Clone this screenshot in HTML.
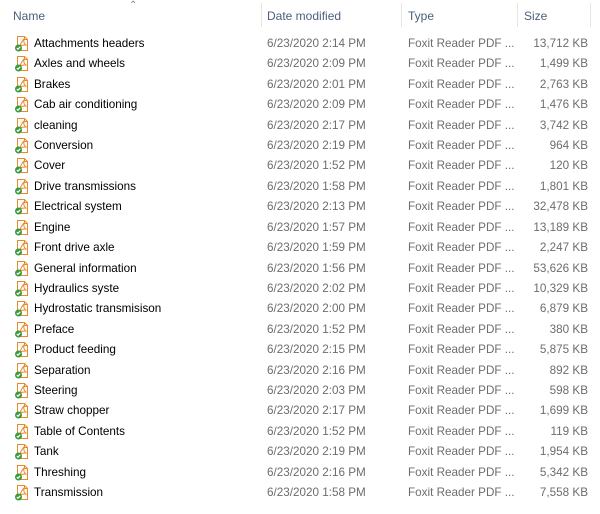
<!DOCTYPE html>
<html><head><style>
body{margin:0;width:600px;height:514px;background:#fff;font-family:"Liberation Sans",sans-serif;font-size:11.7px;overflow:hidden;position:relative}
.h{position:absolute;top:9px;color:#4c607a;font-size:12px}
.sep{position:absolute;top:3px;width:1px;height:24px;background:#e5e5e5}
.r{position:absolute;left:0;width:600px;height:20px;line-height:20px}
.r span{position:absolute;top:0}
.n{left:34px;color:#000}
.d{left:267px;color:#6d6d6d}
.t{left:408px;color:#6d6d6d}
.s{right:12px;color:#6d6d6d}
.ic{position:absolute;left:14px;top:2px;width:16px;height:16px}
</style></head><body>
<div class="h" style="left:13px">Name</div>
<div style="position:absolute;left:129px;top:0;color:#888;font-size:10px">&#8963;</div>
<div class="sep" style="left:261px"></div>
<div class="h" style="left:267px">Date modified</div>
<div class="sep" style="left:401px"></div>
<div class="h" style="left:408px">Type</div>
<div class="sep" style="left:517px"></div>
<div class="h" style="left:524px">Size</div>
<div class="sep" style="left:590px"></div>
<div id="rows"></div>
<script>
const data=[["Attachments headers","2:14","13,712"],["Axles and wheels","2:09","1,499"],["Brakes","2:01","2,763"],["Cab air conditioning","2:09","1,476"],["cleaning","2:17","3,742"],["Conversion","2:19","964"],["Cover","1:52","120"],["Drive transmissions","1:58","1,801"],["Electrical system","2:13","32,478"],["Engine","1:57","13,189"],["Front drive axle","1:59","2,247"],["General information","1:56","53,626"],["Hydraulics syste","2:02","10,329"],["Hydrostatic transmisison","2:00","6,879"],["Preface","1:52","380"],["Product feeding","2:15","5,875"],["Separation","2:16","892"],["Steering","2:03","598"],["Straw chopper","2:17","1,699"],["Table of Contents","1:52","119"],["Tank","2:19","1,954"],["Threshing","2:16","5,342"],["Transmission","1:58","7,558"]];
const icon='<svg class="ic" viewBox="0 0 16 16"><path d="M3.5 0.5h7l3 3v11h-10z" fill="#fff" stroke="#e8892b"/><path d="M10.5 0.5v3h3" fill="none" stroke="#e8892b"/><path d="M6 10c1-3 3-6 4-7c0 2-1 4 2 6c-2 0-5 0-6 1z" fill="none" stroke="#e8892b" stroke-width="1"/><circle cx="4.5" cy="12" r="3.5" fill="#3a9a3a"/><path d="M2.8 12l1.2 1.2 2.2-2.4" stroke="#fff" stroke-width="1.2" fill="none"/></svg>';
let h='';data.forEach((r,i)=>{const y=34+i*20.41;h+=`<div class="r" style="top:${y}px">${icon}<span class="n">${r[0]}</span><span class="d">6/23/2020 ${r[1]} PM</span><span class="t">Foxit Reader PDF ...</span><span class="s">${r[2]} KB</span></div>`});
document.getElementById('rows').innerHTML=h;
</script>
</body></html>
